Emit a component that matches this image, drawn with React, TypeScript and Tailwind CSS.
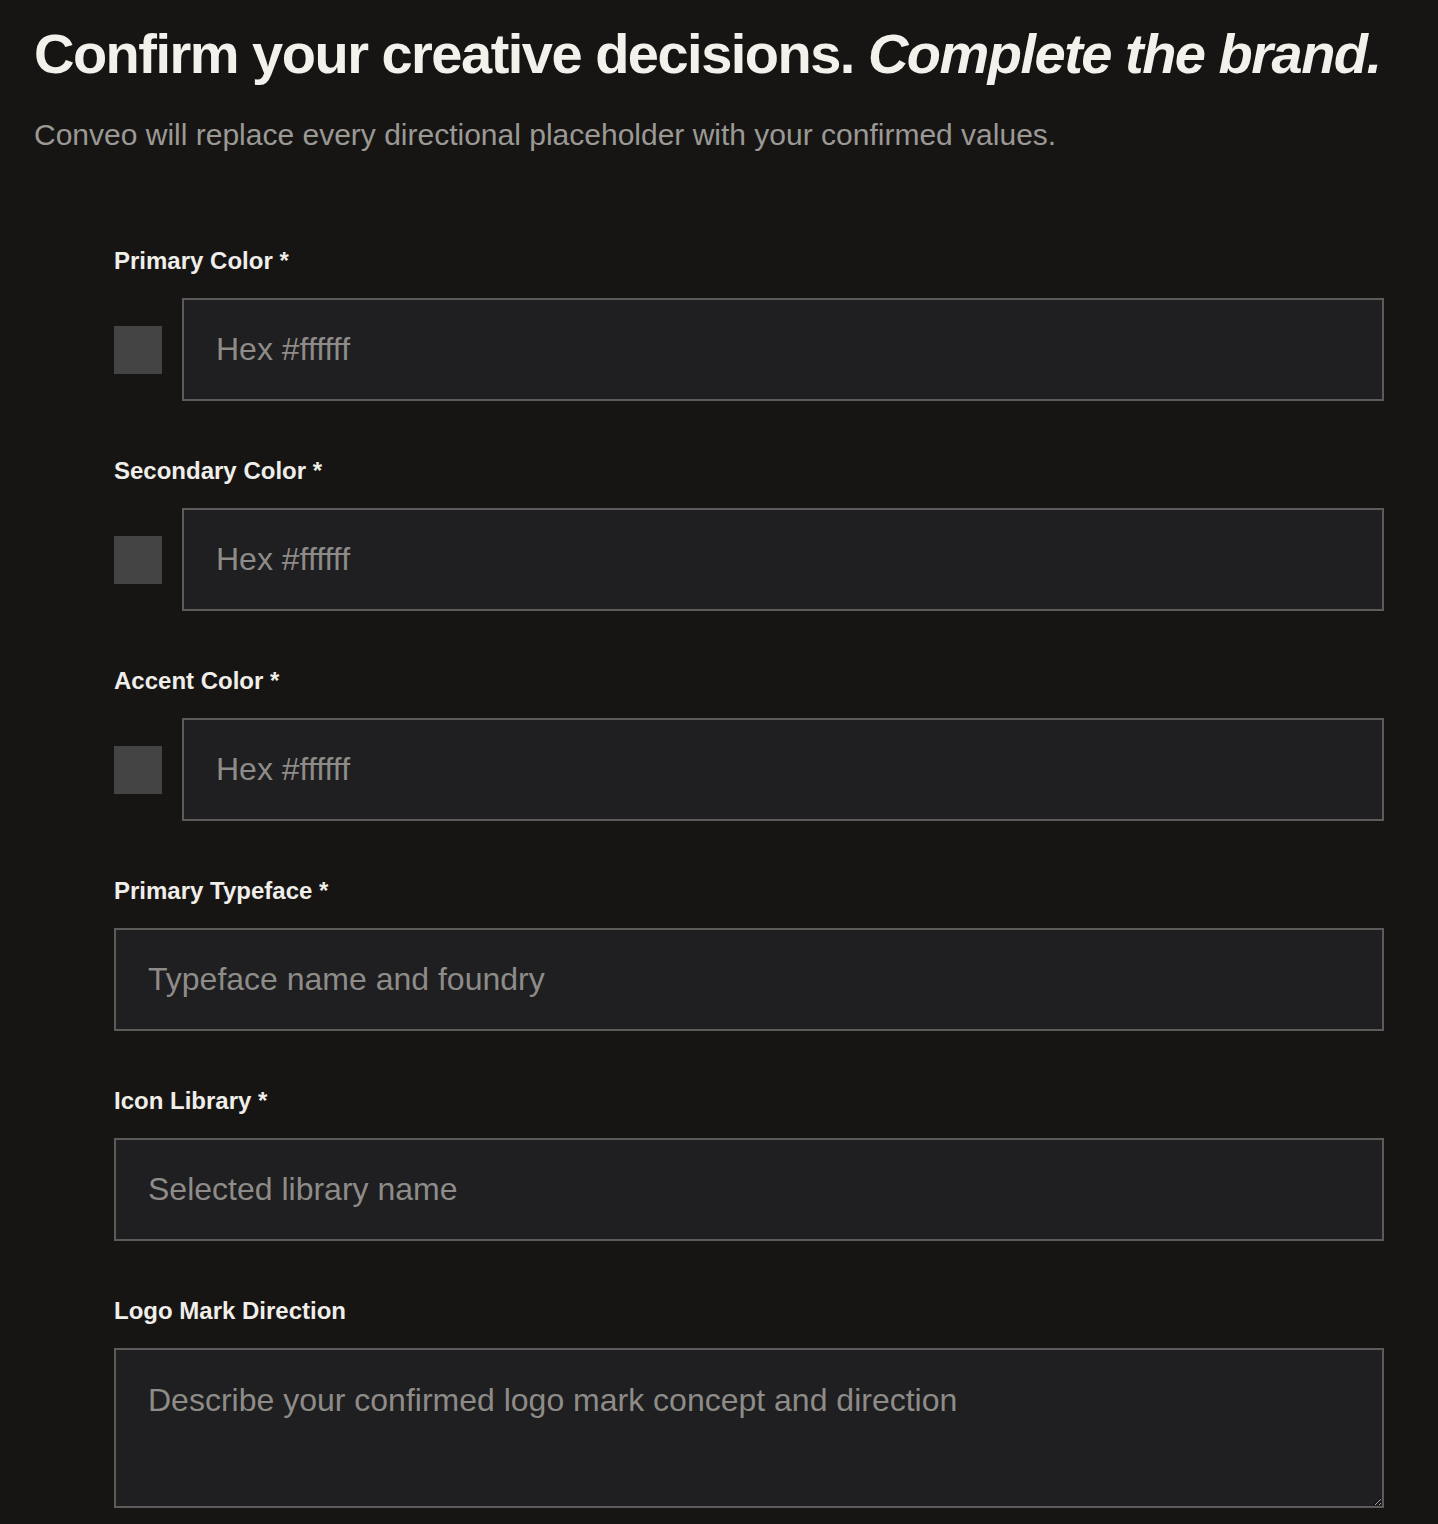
import React from "react";

type Field = {
  label: string;
  required?: boolean;
  placeholder: string;
  kind: "color" | "text" | "textarea";
};

const fields: Field[] = [
  { label: "Primary Color", required: true, placeholder: "Hex #ffffff", kind: "color" },
  { label: "Secondary Color", required: true, placeholder: "Hex #ffffff", kind: "color" },
  { label: "Accent Color", required: true, placeholder: "Hex #ffffff", kind: "color" },
  { label: "Primary Typeface", required: true, placeholder: "Typeface name and foundry", kind: "text" },
  { label: "Icon Library", required: true, placeholder: "Selected library name", kind: "text" },
  {
    label: "Logo Mark Direction",
    placeholder: "Describe your confirmed logo mark concept and direction",
    kind: "textarea",
  },
];

const inputClass =
  "w-full border-2 border-[#5c5b59] bg-[#1f1e20] px-[32px] text-[32px] text-[#ecebe7] placeholder:text-[#8e8c88] outline-none";

function FormField({ field }: { field: Field }) {
  return (
    <div className="flex flex-col">
      <label className="mb-[22px] text-[24px] leading-[30px] font-semibold text-[#f0eee9]">
        {field.label}
        {field.required && " *"}
      </label>
      {field.kind === "color" && (
        <div className="flex items-center gap-5">
          <div className="h-12 w-12 shrink-0 bg-[#444444]" />
          <input type="text" placeholder={field.placeholder} className={`${inputClass} h-[103px]`} />
        </div>
      )}
      {field.kind === "text" && (
        <input type="text" placeholder={field.placeholder} className={`${inputClass} h-[103px]`} />
      )}
      {field.kind === "textarea" && (
        <textarea
          placeholder={field.placeholder}
          className={`${inputClass} h-[160px] py-[30px] leading-[40px] [color-scheme:dark]`}
        />
      )}
    </div>
  );
}

export default function App() {
  return (
    <div
      className="min-h-screen bg-[#161514] pt-[22px] pb-10"
      style={{ fontFamily: '"Liberation Sans", Arial, sans-serif' }}
    >
      <div className="px-[34px]">
        <h1 className="whitespace-nowrap text-[56px] leading-[64px] font-bold tracking-[-0.027em] text-[#f3f1ec]">
          Confirm your creative decisions. <em className="italic">Complete the brand.</em>
        </h1>
        <p className="mt-[31px] text-[30px] leading-[36px] text-[#9b9994]">
          Conveo will replace every directional placeholder with your confirmed values.
        </p>
      </div>
      <form className="mt-[93px] ml-[114px] mr-[54px] flex flex-col gap-[55px]">
        {fields.map((f) => (
          <FormField key={f.label} field={f} />
        ))}
      </form>
    </div>
  );
}
